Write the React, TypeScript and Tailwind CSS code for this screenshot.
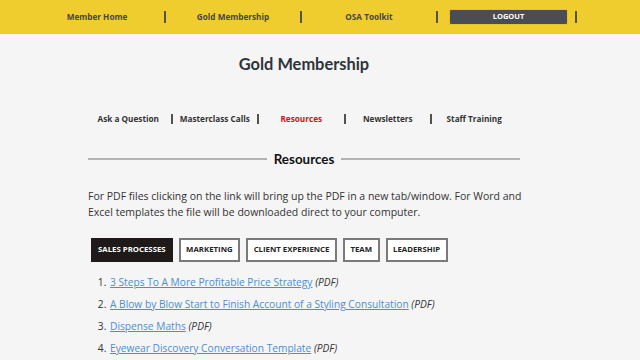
const topNav = ["Member Home", "Gold Membership", "OSA Toolkit"];

const subNav = [
  { label: "Ask a Question", active: false },
  { label: "Masterclass Calls", active: false },
  { label: "Resources", active: true },
  { label: "Newsletters", active: false },
  { label: "Staff Training", active: false },
];

const tabs = ["Sales Processes", "Marketing", "Client Experience", "Team", "Leadership"];

const files = [
  "3 Steps To A More Profitable Price Strategy",
  "A Blow by Blow Start to Finish Account of a Styling Consultation",
  "Dispense Maths",
  "Eyewear Discovery Conversation Template",
];

const Separator = ({ className = "" }: { className?: string }) => (
  <span className={`block w-[2px] bg-[#55524a] ${className}`} />
);

const App = () => {
  return (
    <div className="min-h-[360px] bg-[#f5f5f5] font-['Open_Sans',sans-serif] text-[#333]">
      {/* top bar */}
      <header className="h-[34px] bg-[#f0cd2e]">
        <nav className="ml-[30px] flex h-full items-center">
          {topNav.map((item) => (
            <div key={item} className="flex items-center">
              <a className="w-[134px] text-center text-[8.2px] font-bold text-[#45454a]">{item}</a>
              <Separator className="h-[12px]" />
            </div>
          ))}
          <div className="flex items-center">
            <div className="flex w-[137px] items-center pl-[11px]">
              <button className="h-[16px] w-[119px] rounded-[2px] border border-[#e8c51a] bg-[#4b4d55] text-[7.5px] font-bold leading-none text-white">
                LOGOUT
              </button>
            </div>
            <Separator className="h-[12px]" />
          </div>
        </nav>
      </header>

      <main className="ml-[88px] w-[432px]">
        <h1 className="mt-[19px] text-center font-['Lato',sans-serif] text-[16.4px] font-bold leading-[22px] text-[#2f343b]">
          Gold Membership
        </h1>

        {/* section nav */}
        <nav className="-ml-[2px] mt-[37px] flex h-[14px] items-center">
          {subNav.map((item, i) => (
            <div key={item.label} className="flex items-center">
              <a
                className={`w-[84.5px] text-center text-[8.2px] font-bold leading-[14px] ${
                  item.active ? "text-[#d0141c]" : "text-[#333]"
                }`}
              >
                {item.label}
              </a>
              {i < subNav.length - 1 && <Separator className="h-[10px] bg-[#666]" />}
            </div>
          ))}
        </nav>

        <div className="mt-[23px] flex h-[20px] items-center gap-[7px]">
          <span className="h-[2px] flex-1 bg-[#b3b3b3]" />
          <h2 className="font-['Lato',sans-serif] text-[13.4px] font-bold text-[#111]">Resources</h2>
          <span className="h-[2px] flex-1 bg-[#b3b3b3]" />
        </div>

        <p className="mt-[19px] whitespace-nowrap text-[10.5px] leading-[16px] text-[#333]">
          For PDF files clicking on the link will bring up the PDF in a new tab/window. For Word and
          <br />
          Excel templates the file will be downloaded direct to your computer.
        </p>

        <div className="ml-[3px] mt-[18px] flex gap-[6px]">
          {tabs.map((t, i) => (
            <button
              key={t}
              className={`h-[24px] text-[7.8px] font-bold uppercase ${
                i === 0
                  ? "bg-[#1e1a1a] px-[7px] text-white"
                  : "border-2 border-[#7a7a7a] bg-white px-[5.5px] text-[#222]"
              }`}
            >
              {t}
            </button>
          ))}
        </div>

        <ol className="mt-[9px] list-decimal pl-[21px] text-[10.2px] leading-[22px] text-[#333]">
          {files.map((f) => (
            <li key={f} className="pl-[1px]">
              <a className="text-[#4a8ed6] underline">{f}</a> <em>(PDF)</em>
            </li>
          ))}
        </ol>
      </main>
    </div>
  );
};

export default App;
